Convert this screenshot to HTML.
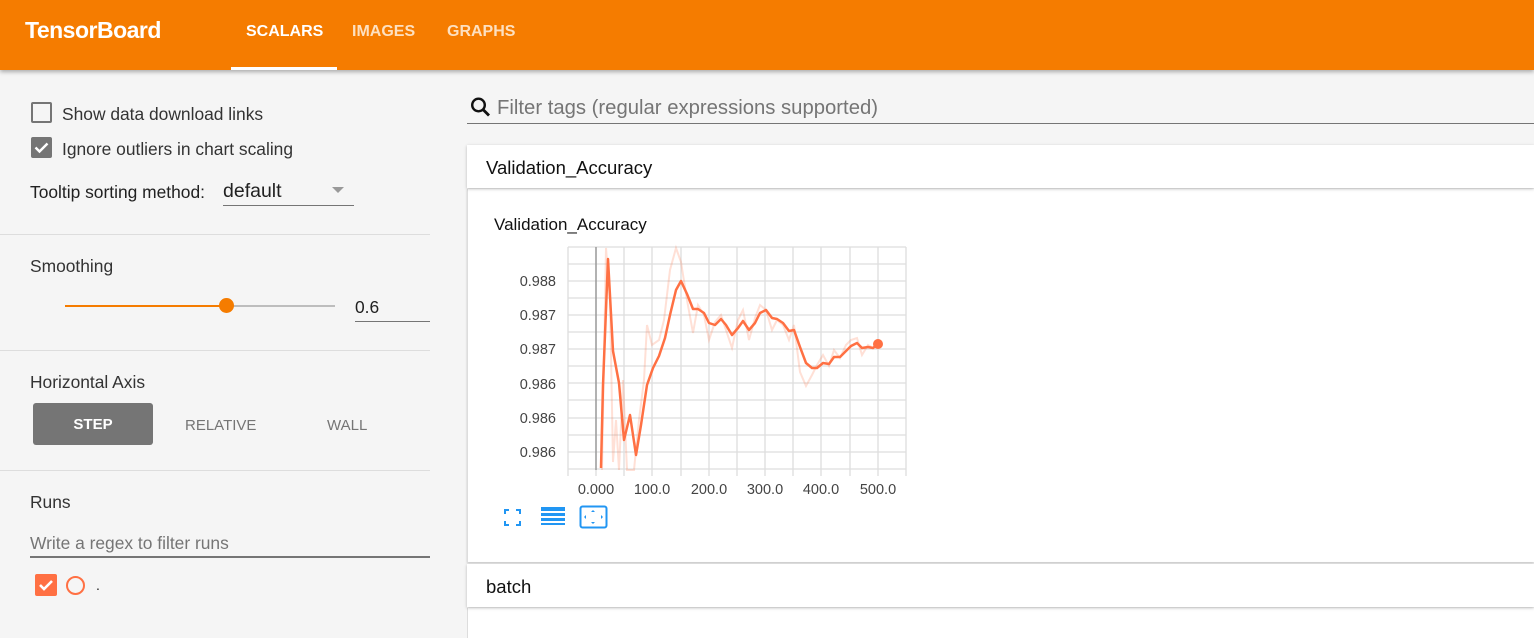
<!DOCTYPE html>
<html><head><meta charset="utf-8"><style>
*{margin:0;padding:0;box-sizing:border-box}
body{width:1534px;height:634px;overflow:hidden;background:#f5f5f5;font-family:"Liberation Sans",sans-serif;position:relative;color:#212121}
.a{position:absolute;white-space:nowrap}
#hdr{left:0;top:0;width:1534px;height:70px;background:#f57c00;box-shadow:0 2px 4px rgba(0,0,0,.3);z-index:2}
.tab{font-size:16px;font-weight:bold;top:22px}
.hr{height:1px;background:#ddd;left:0;width:430px}
.lbl{font-size:17.4px;color:#333}
.card{background:#fff;left:467px;width:1067px}
</style></head><body>
<div id="hdr" class="a">
 <div class="a" style="left:25px;top:17px;font-size:23px;font-weight:bold;color:#fff;letter-spacing:-0.5px">TensorBoard</div>
 <div class="a tab" style="left:246px;top:23px;color:#fff">SCALARS</div>
 <div class="a tab" style="left:352px;top:23px;color:#fde0c0">IMAGES</div>
 <div class="a tab" style="left:447px;top:23px;color:#fde0c0">GRAPHS</div>
 <div class="a" style="left:231px;top:67px;width:106px;height:3px;background:#fff"></div>
</div>
<div class="a" style="left:31px;top:102px;width:21px;height:21px;border:2px solid #757575;border-radius:2px"></div>
<div class="a lbl" style="left:62px;top:104px">Show data download links</div>
<div class="a" style="left:31px;top:137px;width:21px;height:21px;background:#757575;border-radius:2px"><svg width="21" height="21"><path d="M4.5 10.5l4 4 8-8" stroke="#fff" stroke-width="2.4" fill="none"/></svg></div>
<div class="a lbl" style="left:62px;top:139px">Ignore outliers in chart scaling</div>
<div class="a lbl" style="left:30px;top:182px;color:#212121">Tooltip sorting method:</div>
<div class="a" style="left:223px;top:180px;font-size:19.5px;color:#212121">default</div>
<div class="a" style="left:332px;top:187px;width:0;height:0;border-left:6px solid transparent;border-right:6px solid transparent;border-top:6px solid #999"></div>
<div class="a" style="left:223px;top:205px;width:131px;height:1px;background:#757575"></div>
<div class="a hr" style="top:234px"></div>
<div class="a lbl" style="left:30px;top:256px">Smoothing</div>
<div class="a" style="left:65px;top:305px;width:162px;height:2px;background:#f57c00"></div>
<div class="a" style="left:227px;top:305px;width:108px;height:2px;background:#bdbdbd"></div>
<div class="a" style="left:219px;top:298px;width:15px;height:15px;border-radius:50%;background:#f57c00"></div>
<div class="a" style="left:355px;top:297px;font-size:17.4px">0.6</div>
<div class="a" style="left:355px;top:321px;width:75px;height:1px;background:#757575"></div>
<div class="a hr" style="top:350px"></div>
<div class="a lbl" style="left:30px;top:372px">Horizontal Axis</div>
<div class="a" style="left:33px;top:403px;width:120px;height:42px;background:#757575;border-radius:3px;color:#fff;font-size:15px;font-weight:bold;text-align:center;line-height:43px">STEP</div>
<div class="a" style="left:185px;top:417px;font-size:15px;color:#757575">RELATIVE</div>
<div class="a" style="left:327px;top:417px;font-size:15px;color:#757575">WALL</div>
<div class="a hr" style="top:470px"></div>
<div class="a lbl" style="left:30px;top:492px">Runs</div>
<div class="a" style="left:30px;top:533px;font-size:17.4px;color:#757575">Write a regex to filter runs</div>
<div class="a" style="left:30px;top:556px;width:400px;height:2px;background:#757575"></div>
<div class="a" style="left:35px;top:574px;width:22px;height:22px;background:#ff7043;border-radius:2px"><svg width="22" height="22"><path d="M5 11l4 4 8-8" stroke="#fff" stroke-width="2.6" fill="none"/></svg></div>
<div class="a" style="left:66px;top:576px;width:19px;height:19px;border:2px solid #ff7043;border-radius:50%"></div>
<div class="a" style="left:96px;top:577px;font-size:14px">.</div>
<svg class="a" style="left:470px;top:96px" width="22" height="24"><circle cx="8.5" cy="9" r="6.3" stroke="#111" stroke-width="2.4" fill="none"/><path d="M13 13.5l6 6" stroke="#111" stroke-width="2.8"/></svg>
<div class="a" style="left:497px;top:97px;font-size:20.3px;color:#757575">Filter tags (regular expressions supported)</div>
<div class="a" style="left:467px;top:123px;width:1067px;height:1px;background:#757575"></div>
<div class="a card" style="top:145px;height:43px;box-shadow:0 1px 3px rgba(0,0,0,.25);z-index:1"></div>
<div class="a" style="left:486px;top:157px;font-size:18.5px;color:#111;z-index:1">Validation_Accuracy</div>
<div class="a card" style="top:189px;height:373px;border-left:1px solid #ddd;box-shadow:0 1px 2px rgba(0,0,0,.2)"></div>
<div class="a" style="left:494px;top:215px;font-size:17px;color:#111">Validation_Accuracy</div>
<svg class="a" style="left:0;top:0" width="1000" height="540">
<g stroke="#ddd" stroke-width="1.3">
<path d="M568 247V470M624 247V470M652 247V470M681 247V470M709 247V470M737 247V470M765 247V470M793 247V470M821 247V470M850 247V470M878 247V470M906 247V470"/>
<path d="M568 247H906M568 264H906M568 281H906M568 298H906M568 315H906M568 332H906M568 349H906M568 366H906M568 383H906M568 400H906M568 418H906M568 435H906M568 452H906M568 469H906"/>
<path d="M568 470V476M596 470V476M624 470V476M652 470V476M681 470V476M709 470V476M737 470V476M765 470V476M793 470V476M821 470V476M850 470V476M878 470V476M906 470V476"/>
</g>
<path d="M596 247V470" stroke="#999" stroke-width="1.5"/>
<g font-size="14.5" fill="#444" font-family="Liberation Sans,sans-serif">
<text x="556" y="286" text-anchor="end">0.988</text><text x="556" y="320" text-anchor="end">0.987</text><text x="556" y="354" text-anchor="end">0.987</text><text x="556" y="389" text-anchor="end">0.986</text><text x="556" y="423" text-anchor="end">0.986</text><text x="556" y="457" text-anchor="end">0.986</text>
<g text-anchor="middle"><text x="596" y="494">0.000</text><text x="652" y="494">100.0</text><text x="709" y="494">200.0</text><text x="765" y="494">300.0</text><text x="821" y="494">400.0</text><text x="878" y="494">500.0</text></g>
</g>
<polyline fill="none" stroke="#ff7043" stroke-opacity=".22" stroke-width="2" points="602,470 606,248 610,300 613,462 616,420 619,470 623,380 627,470 630,470 634,470 639,420 644,380 647,325 652,345 659,340 664,320 670,270 676,248 681,262 687,300 693,333 698,305 704,315 709,340 715,322 721,315 726,330 732,348 738,320 743,310 749,340 755,318 760,305 766,310 772,330 777,320 783,325 789,340 794,325 800,372 806,386 812,375 817,365 823,355 829,366 834,350 840,358 846,345 851,340 857,338 862,355 868,345 873,348 878,344"/>
<polyline fill="none" stroke="#ff7043" stroke-width="2.5" stroke-linejoin="round" points="601,468 603,385 608,259 613,351 619,383 624,440 630,415 636,455 641,425 647,385 653,368 659,356 665,338 670,315 676,290 681,281 687,294 693,309 698,309 704,313 709,323 715,325 721,319 726,325 732,335 738,328 743,321 749,330 755,323 760,313 766,310 772,318 777,319 783,323 789,331 794,330 800,347 806,363 812,368 817,368 823,363 829,364 834,357 840,357 846,351 851,346 857,343 862,348 868,347 873,348 878,344"/>
<circle cx="878" cy="344" r="5" fill="#ff7043"/>
<g fill="#2196f3">
<path d="M504 509h5v2h-3v3h-2zM516 509h5v5h-2v-3h-3zM504 521h2v3h3v2h-5zM519 521h2v5h-5v-2h3z"/>
<rect x="541" y="507" width="24" height="4"/><rect x="541" y="513" width="24" height="3"/><rect x="541" y="518" width="24" height="3"/><rect x="541" y="523" width="24" height="2"/>
</g>
<rect x="580.5" y="506.5" width="26" height="21" rx="2" fill="none" stroke="#2196f3" stroke-width="2"/>
<path d="M593 510l2 2h-4zM593 524l2-2h-4zM584 517l2-2v4zM603 517l-2-2v4z" fill="#2196f3"/>
</svg>
<div class="a card" style="top:564px;height:43px;box-shadow:0 1px 3px rgba(0,0,0,.25);z-index:1"></div>
<div class="a" style="left:486px;top:576px;font-size:18.5px;color:#111;z-index:1">batch</div>
<div class="a card" style="top:608px;height:30px;border-left:1px solid #ddd"></div>
</body></html>
